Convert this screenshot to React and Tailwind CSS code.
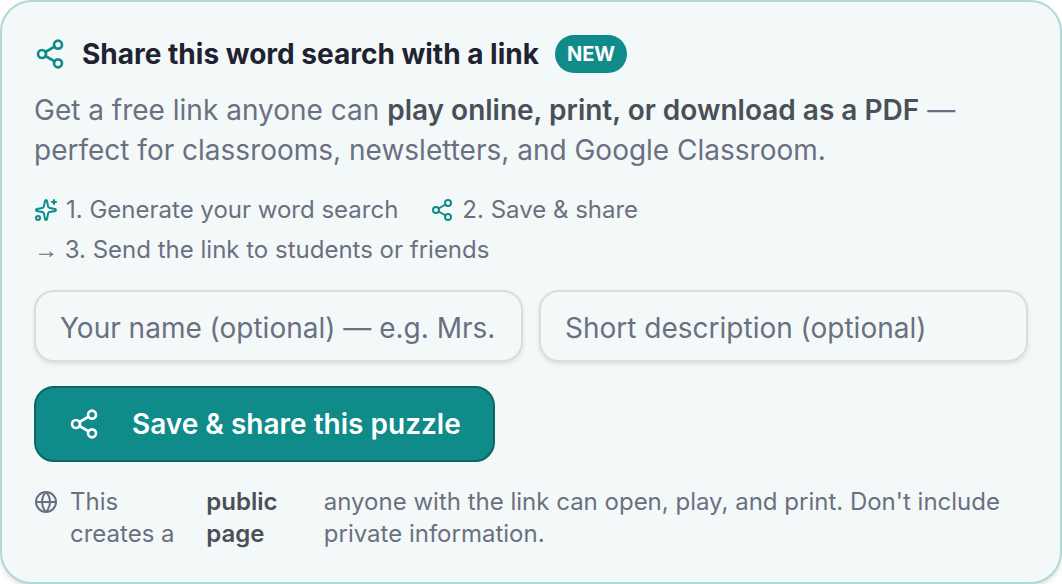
import React from "react";
import { Share2, Sparkles, Globe } from "lucide-react";

export default function App() {
  return (
    <section className="flex w-full flex-col rounded-[32px] border-2 border-[#addad8] bg-[#f3f9f9] px-8 pt-8 pb-8 font-['Inter',sans-serif] text-[#6b7080] shadow-md">
      <div className="flex items-center gap-4">
        <Share2 className="size-8 text-[#0f8b8a]" />
        <h2 className="text-[28px] leading-10 font-bold text-[#1f2330]">Share this word search with a link</h2>
        <span className="rounded-full bg-[#0f8b8a] px-3 py-1 text-[20px] leading-[30px] font-bold text-white">NEW</span>
      </div>
      <p className="mt-4 text-[28px] leading-10">
        Get a free link anyone can <strong className="font-semibold text-[#4a4f58]">play online, print, or download as a PDF</strong> — perfect for classrooms, newsletters, and Google Classroom.
      </p>
      <ol className="mt-6 flex flex-wrap gap-x-8 gap-y-2 text-[24px] leading-8">
        <li className="flex items-center gap-2"><Sparkles className="size-6 text-[#0f8b8a]" />1. Generate your word search</li>
        <li className="flex items-center gap-2"><Share2 className="size-6 text-[#0f8b8a]" />2. Save &amp; share</li>
        <li><span className="font-['Liberation_Sans',sans-serif]">→</span> 3. Send the link to students or friends</li>
      </ol>
      <div className="mt-6 grid grid-cols-2 gap-4">
        <input aria-label="Your name" placeholder="Your name (optional) — e.g. Mrs. Smith" className="h-[72px] min-w-0 rounded-[20px] border-2 border-[#dfdcd5] px-6 pt-1 text-[28px] shadow-[0_2px_4px_rgba(0,0,0,0.1)] placeholder:text-[#6b7080]" />
        <input aria-label="Short description" placeholder="Short description (optional)" className="h-[72px] min-w-0 rounded-[20px] border-2 border-[#dfdcd5] px-6 pt-1 text-[28px] shadow-[0_2px_4px_rgba(0,0,0,0.1)] placeholder:text-[#6b7080]" />
      </div>
      <button type="button" className="mt-6 flex h-[76px] items-center gap-8 self-start rounded-[20px] border-2 border-[#0b6665] bg-[#0f8b8a] px-8 text-[28px] font-semibold text-white">
        <Share2 className="size-8" />Save &amp; share this puzzle
      </button>
      <p className="mt-6 flex items-start gap-3 text-[24px] leading-8">
        <Globe className="mt-1 size-6 shrink-0" />
        <span>This creates a</span>
        <strong className="font-semibold text-[#4a4f58]">public page</strong>
        <span>anyone with the link can open, play, and print. Don't include private information.</span>
      </p>
    </section>
  );
}
